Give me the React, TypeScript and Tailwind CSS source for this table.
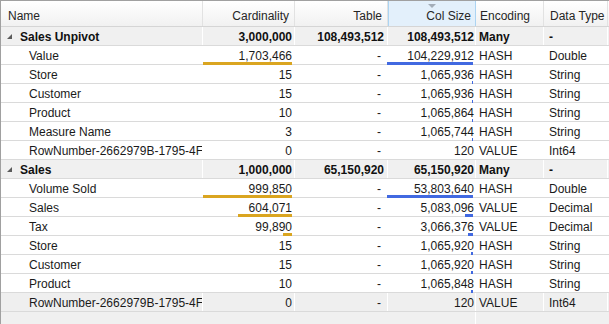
import React from 'react';

type Row = { name: string; card: string; table: string; size: string; enc: string; type: string };
type Group = Row & { rows: Row[] };

const groups: Group[] = [
    {
        name: 'Sales Unpivot', card: '3,000,000', table: '108,493,512', size: '108,493,512', enc: 'Many', type: '-',
        rows: [
            { name: 'Value', card: '1,703,466', table: '-', size: '104,229,912', enc: 'HASH', type: 'Double' },
            { name: 'Store', card: '15', table: '-', size: '1,065,936', enc: 'HASH', type: 'String' },
            { name: 'Customer', card: '15', table: '-', size: '1,065,936', enc: 'HASH', type: 'String' },
            { name: 'Product', card: '10', table: '-', size: '1,065,864', enc: 'HASH', type: 'String' },
            { name: 'Measure Name', card: '3', table: '-', size: '1,065,744', enc: 'HASH', type: 'String' },
            { name: 'RowNumber-2662979B-1795-4F', card: '0', table: '-', size: '120', enc: 'VALUE', type: 'Int64' },
        ],
    },
    {
        name: 'Sales', card: '1,000,000', table: '65,150,920', size: '65,150,920', enc: 'Many', type: '-',
        rows: [
            { name: 'Volume Sold', card: '999,850', table: '-', size: '53,803,640', enc: 'HASH', type: 'Double' },
            { name: 'Sales', card: '604,071', table: '-', size: '5,083,096', enc: 'VALUE', type: 'Decimal' },
            { name: 'Tax', card: '99,890', table: '-', size: '3,066,376', enc: 'VALUE', type: 'Decimal' },
            { name: 'Store', card: '15', table: '-', size: '1,065,920', enc: 'HASH', type: 'String' },
            { name: 'Customer', card: '15', table: '-', size: '1,065,920', enc: 'HASH', type: 'String' },
            { name: 'Product', card: '10', table: '-', size: '1,065,848', enc: 'HASH', type: 'String' },
            { name: 'RowNumber-2662979B-1795-4F', card: '0', table: '-', size: '120', enc: 'VALUE', type: 'Int64' },
        ],
    },
];

const num = (s: string) => Number(s.replace(/,/g, '')) || 0;

const barWidth = (value: string, max: number, full: number) => {
    const w = (num(value) / max) * full;
    return w < 0.5 ? 0 : Math.max(1, Math.round(w));
};

const cols = 'grid grid-cols-[202px_92px_93px_88px_68px_64px_1fr]';
const cell = 'relative h-[18px] leading-[20px] whitespace-nowrap border-r border-white';

function Bar({ width, color }: { width: number; color: string }) {
    if (!width) return null;
    return <span className={`absolute right-[2px] bottom-[-1px] h-[3px] ${color}`} style={{ width }} />;
}

function Header() {
    return (
        <div className={`${cols} h-[26px] border-b border-[#d5d5d5] bg-gradient-to-b from-white to-[#f1f1f1] text-[#262626]`}>
            <div className="flex items-center pl-[7px] pt-[4px] border-r border-[#e2e2e2]">Name</div>
            <div className="flex items-center justify-end pr-[5px] pt-[4px] border-r border-[#e2e2e2]">Cardinality</div>
            <div className="flex items-center justify-end pr-[5px] pt-[4px] border-r border-[#e2e2e2]">Table</div>
            <div className="relative flex items-center justify-end pr-[4px] pt-[4px] bg-[#e3f0fb] border-x border-[#acd4f2]">
                Col Size
                <svg className="absolute left-[39px] top-[3px]" width="8" height="5" viewBox="0 0 8 5">
                    <polygon points="0,0 8,0 4,4" fill="#a3adb8" />
                </svg>
            </div>
            <div className="flex items-center pl-[4px] pt-[4px] border-r border-[#e2e2e2]">Encoding</div>
            <div className="flex items-center pl-[6px] pt-[4px] border-r border-[#e2e2e2]">Data Type</div>
            <div />
        </div>
    );
}

function GroupRow({ g }: { g: Group }) {
    return (
        <div className={`${cols} border-b border-[#dadada] bg-[#f0f0f0] font-bold text-[#111]`}>
            <div className={`${cell} overflow-hidden flex items-center`}>
                <svg className="ml-[6px] mr-[8px] shrink-0" width="5" height="5" viewBox="0 0 5 5">
                    <polygon points="5,0 5,5 0,5" fill="#5a5a5a" />
                </svg>
                <span className="pt-[2px]">{g.name}</span>
            </div>
            <div className={`${cell} text-right pr-[2px]`}>{g.card}</div>
            <div className={`${cell} text-right pr-[3px]`}>{g.table}</div>
            <div className={`${cell} text-right pr-[1px]`}>{g.size}</div>
            <div className={`${cell} pl-[3px]`}>{g.enc}</div>
            <div className={`${cell} pl-[5px]`}>{g.type}</div>
            <div />
        </div>
    );
}

function ChildRow({ r, maxCard, maxSize, selected }: { r: Row; maxCard: number; maxSize: number; selected: boolean }) {
    return (
        <div className={`${cols} border-b border-[#dadada] text-[#1a1a1a] ${selected ? 'bg-[#efefef]' : 'bg-white'}`}>
            <div className={`${cell} overflow-hidden pl-[28px] pr-[1px]`} title={r.name}>
                {r.name}
            </div>
            <div className={`${cell} text-right pr-[2px]`}>
                {r.card}
                <Bar width={barWidth(r.card, maxCard, 89)} color="bg-[#daa520]" />
            </div>
            <div className={`${cell} text-right pr-[6px]`}>{r.table}</div>
            <div className={`${cell} text-right pr-[1px]`}>
                {r.size}
                <Bar width={barWidth(r.size, maxSize, 86)} color="bg-[#4169e1]" />
            </div>
            <div className={`${cell} pl-[3px]`}>{r.enc}</div>
            <div className={`${cell} pl-[5px]`}>{r.type}</div>
            <div />
        </div>
    );
}

export default function App() {
    return (
        <div
            className="w-[609px] h-[324px] overflow-hidden bg-[#f0f0f0] border-t border-l border-[#a0a0a0] text-[12px] flex flex-col"
            style={{ fontFamily: '"Liberation Sans", Arial, sans-serif' }}
        >
            <Header />
            {groups.map((g, gi) => {
                const maxCard = Math.max(...g.rows.map((r) => num(r.card)));
                const maxSize = Math.max(...g.rows.map((r) => num(r.size)));
                return (
                    <React.Fragment key={g.name}>
                        <GroupRow g={g} />
                        {g.rows.map((r, ri) => (
                            <ChildRow
                                key={ri}
                                r={r}
                                maxCard={maxCard}
                                maxSize={maxSize}
                                selected={gi === groups.length - 1 && ri === g.rows.length - 1}
                            />
                        ))}
                    </React.Fragment>
                );
            })}
            {/* empty space below the grid */}
            <div className="flex-1 grid grid-cols-[474px_1px_1fr]">
                <div />
                <div className="bg-white" />
                <div />
            </div>
        </div>
    );
}
